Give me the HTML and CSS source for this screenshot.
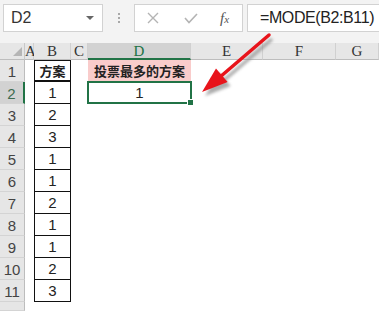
FILE: index.html
```html
<!DOCTYPE html>
<html lang="zh-CN">
<head>
  <meta charset="UTF-8">
  <title>MODE</title>
  <link rel="stylesheet" href="styles.css">
</head>
<body>
<div id="toolbar">
  <div class="namebox"><span>D2</span><span class="caret"></span></div>
  <div class="dots"><i></i><i></i><i></i></div>
  <div class="fnbtns">
    <svg class="btn-x" width="12" height="12" viewBox="0 0 12 12"><path d="M1 1 L11 11 M11 1 L1 11" stroke="#b4b4b4" stroke-width="1.4" fill="none"/></svg>
    <svg class="btn-ok" width="14" height="11" viewBox="0 0 14 11"><path d="M1 5 L5 9.5 L13 1" stroke="#b4b4b4" stroke-width="1.6" fill="none"/></svg>
    <span class="fx">f<span>x</span></span>
  </div>
  <div class="formula">=MODE(B2:B11)</div>
</div>
<div id="sheet"></div>

<svg id="arrow" width="379" height="311" viewBox="0 0 379 311">
  <defs>
    <filter id="blur"><feGaussianBlur stdDeviation="1.5"/></filter>
  </defs>
  <g transform="translate(3,4)" fill="#888" stroke="#888" opacity="0.7" filter="url(#blur)">
    <line x1="269" y1="35" x2="220" y2="77" stroke-width="3.5"/>
    <polygon points="202,92 216,68.4 227.6,82" stroke="none"/>
  </g>
  <g fill="#e8141b" stroke="#e8141b">
    <line x1="269" y1="35" x2="220" y2="77" stroke-width="3.5" stroke-linecap="round"/>
    <polygon points="202,92 216,68.4 227.6,82" stroke="none"/>
  </g>
</svg>

<script>
const sheetEl = document.getElementById('sheet');
const columns = ['A', 'B', 'C', 'D', 'E', 'F', 'G'];
const votes = [1, 2, 3, 1, 1, 2, 1, 1, 2, 3];

function cell(cls, text) {
  const el = document.createElement('div');
  el.className = cls;
  if (text !== undefined) el.textContent = text;
  sheetEl.appendChild(el);
  return el;
}

function drawSheet() {
  cell('corner');
  columns.forEach(c => cell(c === 'D' ? 'colhead active' : 'colhead', c));

  for (let r = 1; r <= 11; r++) {
    cell(r === 2 ? 'rowhead active' : 'rowhead', r);
    columns.forEach(c => {
      if (c === 'B') {
        cell(r === 1 ? 'c box title' : 'c box', r === 1 ? '方案' : votes[r - 2]);
      } else if (c === 'D' && r === 1) {
        cell('c result-head', '投票最多的方案');
      } else if (c === 'D' && r === 2) {
        const sel = cell('c selected', '1');
        const handle = document.createElement('span');
        handle.className = 'handle';
        sel.appendChild(handle);
      } else {
        cell('c');
      }
    });
  }

  cell('rowhead');
}

drawSheet();
</script>
</body>
</html>
```

FILE: styles.css
```css
html, body {
  margin: 0;
  height: 311px;
  overflow: hidden;
  background: #fff;
}
body {
  font-family: "Liberation Sans", Arial, sans-serif;
  position: relative;
}
#toolbar {
  height: 43px;
  box-sizing: border-box;
  padding: 4px 0 0 3px;
  background: #f3f3f3;
  display: flex;
  align-items: flex-start;
}
.namebox, .fnbtns, .formula {
  height: 28px;
  box-sizing: border-box;
  background: #fff;
  border: 1px solid #d2d2d2;
  display: flex;
  align-items: center;
}
.namebox {
  width: 100px;
  padding: 0 0 0 7px;
  font-size: 16px;
  color: #333;
  justify-content: space-between;
}
.caret {
  width: 0;
  height: 0;
  margin-right: 8px;
  border-left: 4px solid transparent;
  border-right: 4px solid transparent;
  border-top: 4px solid #666;
}
.dots {
  width: 31px;
  height: 28px;
  display: flex;
  flex-direction: column;
  align-items: center;
  justify-content: center;
  gap: 2px;
}
.dots i {
  width: 2px;
  height: 2px;
  background: #a8a8a8;
}
.fnbtns {
  width: 109px;
  padding-left: 12px;
}
.btn-x {
  margin-right: 25px;
}
.btn-ok {
  margin-right: 22px;
}
.fx {
  font-family: "Liberation Serif", serif;
  font-style: italic;
  font-size: 15px;
  color: #555;
}
.fx span {
  font-size: 11px;
}
.formula {
  flex: 1;
  margin-left: 4px;
  border-right: none;
  padding-left: 12px;
  font-size: 16px;
  letter-spacing: -0.4px;
  color: #222;
}
#sheet {
  display: grid;
  grid-template-columns: 25px 9px 37px 17px 103px 72px 73px 1fr;
  grid-template-rows: 17px repeat(11, 22px) 1fr;
  height: 268px;
}
.corner {
  background: #e6e6e6;
  border-right: 1px solid #c8c8c8;
  border-bottom: 1px solid #bdbdbd;
  display: flex;
  align-items: flex-end;
  justify-content: flex-end;
  padding: 0 2px 3px 0;
}
.corner::after {
  content: "";
  width: 0;
  height: 0;
  border-left: 9px solid transparent;
  border-bottom: 9px solid #b5b5b5;
}
.colhead {
  background: #e6e6e6;
  border-right: 1px solid #d0d0d0;
  border-bottom: 1px solid #bdbdbd;
  font-family: "Liberation Serif", serif;
  font-size: 15px;
  color: #333;
  text-align: center;
  line-height: 17px;
}
.colhead.active {
  background: #d2d2d2;
  color: #217346;
  border-bottom: 2px solid #217346;
  line-height: 16px;
}
.rowhead {
  background: #e6e6e6;
  border-right: 1px solid #bdbdbd;
  border-bottom: 1px solid #d4d4d4;
  font-size: 15px;
  color: #444;
  text-align: center;
  line-height: 24px;
}
.rowhead.active {
  background: #d2d2d2;
  color: #3d6b4f;
  border-right: 2px solid #217346;
}
.c {
  font-size: 15px;
  color: #222;
  text-align: center;
  line-height: 21px;
}
.box {
  border-left: 1px solid #111;
  border-right: 1px solid #111;
  border-bottom: 1px solid #111;
}
.title {
  border-top: 1px solid #111;
  border-bottom: 2px solid #111;
  font-family: "Noto Sans CJK SC", sans-serif;
  font-weight: bold;
  font-size: 13px;
  line-height: 19px;
}
.result-head {
  background: #f9cccb;
  font-family: "Noto Sans CJK SC", sans-serif;
  font-weight: bold;
  font-size: 13px;
  line-height: 22px;
}
.selected {
  position: relative;
  border: 2px solid #217346;
  margin: -1px -1px 0 -1px;
  line-height: 19px;
}
.handle {
  position: absolute;
  right: -4px;
  bottom: -4px;
  width: 5px;
  height: 5px;
  background: #217346;
  border: 1px solid #fff;
}
#arrow {
  position: absolute;
  left: 0;
  top: 0;
  pointer-events: none;
}
```
